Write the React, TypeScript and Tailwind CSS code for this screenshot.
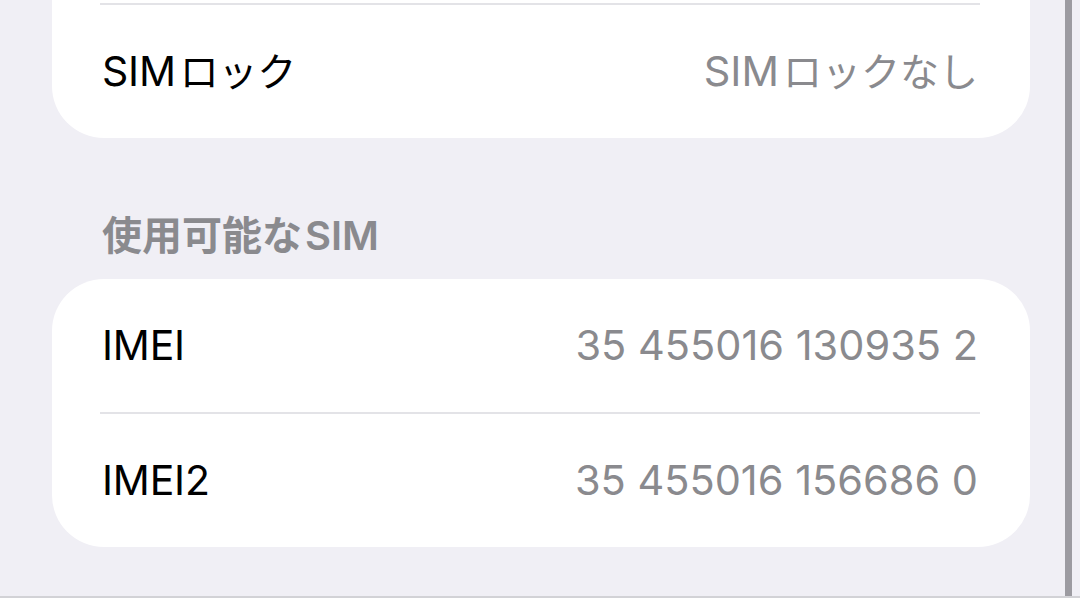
import React from "react";

const font = { fontFamily: 'Inter, "Noto Sans CJK JP", sans-serif' };

// Latin + kana label with the small gap iOS leaves between scripts
function Mixed({ latin, kana }: { latin: string; kana: string }) {
  return (
    <>
      {latin}
      <span className="ml-[4px] text-[39px]">{kana}</span>
    </>
  );
}

function Row({ label, value }: { label: React.ReactNode; value: React.ReactNode }) {
  return (
    <div className="flex h-[133px] items-center justify-between pl-[50px] pr-[52px]">
      <span className="text-[41px] leading-none text-black tracking-[-0.2px]">{label}</span>
      <span className="text-[41.5px] leading-none text-[#8a8a8e]">{value}</span>
    </div>
  );
}

function Divider() {
  return <div className="ml-[48px] mr-[50px] h-[2px] bg-[#e3e3e7]" />;
}

export default function App() {
  return (
    <div className="relative flex h-[598px] w-[1080px] overflow-hidden bg-[#f0eff5]" style={font}>
      <div className="flex w-[1065px] flex-col">
        {/* tail of the device-info group, scrolled partly out of view */}
        <div className="ml-[52px] w-[978px] rounded-b-[52px] bg-white pt-[3px]">
          <Divider />
          <Row
            label={<Mixed latin="SIM" kana="ロック" />}
            value={<Mixed latin="SIM" kana="ロックなし" />}
          />
        </div>

        <div className="ml-[102px] mt-[78px] text-[40px] font-semibold leading-none text-[#8a8a8e]">
          使用可能な<span className="ml-[3px]">SIM</span>
        </div>

        <div className="ml-[52px] mt-[23px] w-[978px] rounded-[52px] bg-white">
          <Row label="IMEI" value="35 455016 130935 2" />
          <Divider />
          <Row label="IMEI2" value="35 455016 156686 0" />
        </div>
      </div>

      {/* scroll indicator */}
      <div className="h-full w-[7px] bg-[#9c9ba1]" />

      <div className="absolute bottom-0 left-0 h-[2px] w-full bg-[#d2d2d6]" />
    </div>
  );
}
